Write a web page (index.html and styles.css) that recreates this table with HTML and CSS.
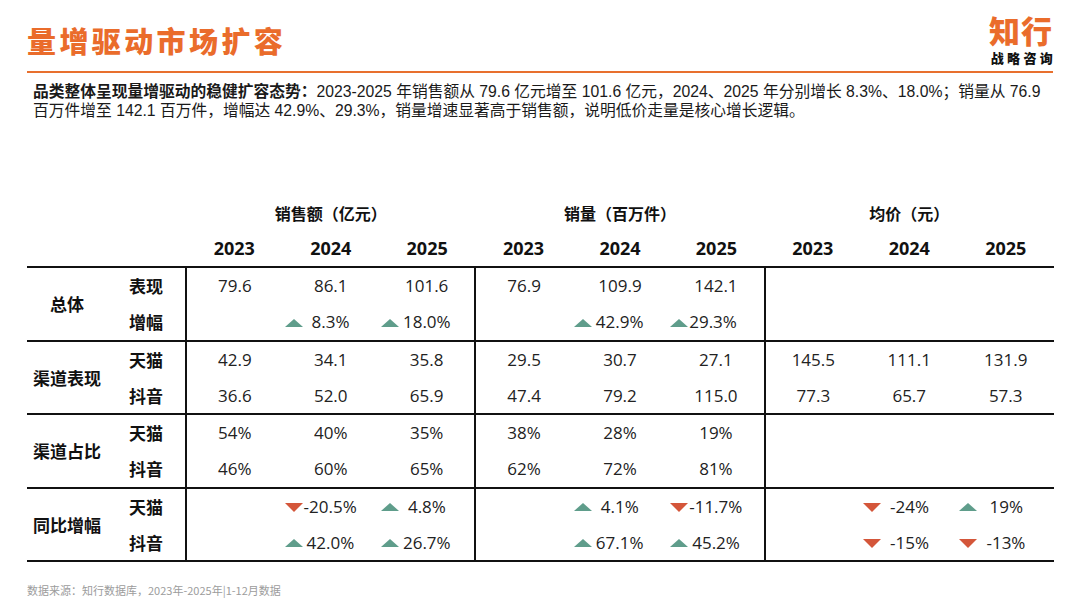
FILE: index.html
```html
<!DOCTYPE html>
<html lang="zh-CN">
<head>
<meta charset="utf-8">
<title>量增驱动市场扩容</title>
<link rel="stylesheet" href="styles.css">
</head>
<body>
<div class="page">
  <header class="top">
    <h1 class="title">量增驱动市场扩容</h1>
    <div class="logo">
      <div class="logo-main">知行</div>
      <div class="logo-sub">战略咨询</div>
    </div>
  </header>

  <p class="summary"><b>品类整体呈现量增驱动的稳健扩容态势：</b>2023-2025 年销售额从 79.6 亿元增至 101.6 亿元，2024、2025 年分别增长 8.3%、18.0%；销量从 76.9<br>百万件增至 142.1 百万件，增幅达 42.9%、29.3%，销量增速显著高于销售额，说明低价走量是核心增长逻辑。</p>

  <table class="data">
    <colgroup>
      <col class="c-group"><col class="c-sub">
      <col class="c-val"><col class="c-val"><col class="c-val">
      <col class="c-val"><col class="c-val"><col class="c-val">
      <col class="c-val"><col class="c-val"><col class="c-val">
    </colgroup>
    <thead>
      <tr class="h-group">
        <th colspan="2"></th>
        <th colspan="3">销售额（亿元）</th>
        <th colspan="3">销量（百万件）</th>
        <th colspan="3">均价（元）</th>
      </tr>
      <tr class="h-year">
        <th colspan="2"></th>
        <th>2023</th><th>2024</th><th>2025</th>
        <th>2023</th><th>2024</th><th>2025</th>
        <th>2023</th><th>2024</th><th>2025</th>
      </tr>
    </thead>
    <tbody>
      <tr class="first">
        <th rowspan="2" class="grp">总体</th>
        <th class="sub">表现</th>
        <td class="sep">79.6</td><td>86.1</td><td>101.6</td>
        <td class="sep">76.9</td><td>109.9</td><td>142.1</td>
        <td class="sep"></td><td></td><td></td>
      </tr>
      <tr>
        <th class="sub">增幅</th>
        <td class="sep"></td>
        <td class="chg"><span class="up"></span><span class="gap-l">8.3%</span></td>
        <td class="chg"><span class="up"></span><span class="gap-s">18.0%</span></td>
        <td class="sep"></td>
        <td class="chg"><span class="up"></span><span class="gap-s">42.9%</span></td>
        <td class="chg"><span class="up"></span><span class="gap-xs">29.3%</span></td>
        <td class="sep"></td><td></td><td></td>
      </tr>

      <tr class="first">
        <th rowspan="2" class="grp">渠道表现</th>
        <th class="sub">天猫</th>
        <td class="sep">42.9</td><td>34.1</td><td>35.8</td>
        <td class="sep">29.5</td><td>30.7</td><td>27.1</td>
        <td class="sep">145.5</td><td>111.1</td><td>131.9</td>
      </tr>
      <tr>
        <th class="sub">抖音</th>
        <td class="sep">36.6</td><td>52.0</td><td>65.9</td>
        <td class="sep">47.4</td><td>79.2</td><td>115.0</td>
        <td class="sep">77.3</td><td>65.7</td><td>57.3</td>
      </tr>

      <tr class="first">
        <th rowspan="2" class="grp">渠道占比</th>
        <th class="sub">天猫</th>
        <td class="sep">54%</td><td>40%</td><td>35%</td>
        <td class="sep">38%</td><td>28%</td><td>19%</td>
        <td class="sep"></td><td></td><td></td>
      </tr>
      <tr>
        <th class="sub">抖音</th>
        <td class="sep">46%</td><td>60%</td><td>65%</td>
        <td class="sep">62%</td><td>72%</td><td>81%</td>
        <td class="sep"></td><td></td><td></td>
      </tr>

      <tr class="first">
        <th rowspan="2" class="grp">同比增幅</th>
        <th class="sub">天猫</th>
        <td class="sep"></td>
        <td class="chg"><span class="down"></span><span class="gap-xs">-20.5%</span></td>
        <td class="chg"><span class="up"></span><span class="gap-l">4.8%</span></td>
        <td class="sep"></td>
        <td class="chg"><span class="up"></span><span class="gap-l">4.1%</span></td>
        <td class="chg"><span class="down"></span><span class="gap-xs">-11.7%</span></td>
        <td class="sep"></td>
        <td class="chg"><span class="down"></span><span class="gap-l">-24%</span></td>
        <td class="chg"><span class="up"></span><span class="gap-xl">19%</span></td>
      </tr>
      <tr class="last">
        <th class="sub">抖音</th>
        <td class="sep"></td>
        <td class="chg"><span class="up"></span><span class="gap-s">42.0%</span></td>
        <td class="chg"><span class="up"></span><span class="gap-s">26.7%</span></td>
        <td class="sep"></td>
        <td class="chg"><span class="up"></span><span class="gap-s">67.1%</span></td>
        <td class="chg"><span class="up"></span><span class="gap-s">45.2%</span></td>
        <td class="sep"></td>
        <td class="chg"><span class="down"></span><span class="gap-l">-15%</span></td>
        <td class="chg"><span class="down"></span><span class="gap-l">-13%</span></td>
      </tr>
    </tbody>
  </table>

  <p class="source">数据来源：知行数据库，2023年-2025年|1-12月数据</p>
</div>
</body>
</html>
```

FILE: styles.css
```css
* { box-sizing: border-box; }

html, body {
  margin: 0;
  padding: 0;
  background: #ffffff;
}

body {
  width: 1080px;
  height: 608px;
  overflow: hidden;
  font-family: "Open Sans", "Noto Sans CJK SC", sans-serif;
  color: #1c1c1c;
}

.page {
  padding: 0 27px;
}

/* ---------- header ---------- */
.top {
  display: flex;
  justify-content: space-between;
  align-items: flex-start;
  height: 73px;
  padding-top: 12px;
  border-bottom: 2px solid #e8702e;
}

.title {
  margin: 12px 0 0 0;
  font-family: "Noto Sans CJK SC", sans-serif;
  font-size: 29px;
  line-height: 32px;
  font-weight: 900;
  letter-spacing: 3.4px;
  color: #ea6c2b;
}

.logo {
  display: flex;
  flex-direction: column;
  align-items: flex-end;
  font-family: "Noto Sans CJK SC", sans-serif;
  font-weight: 900;
}

.logo-main {
  margin-top: 2px;
  font-size: 31px;
  line-height: 31px;
  letter-spacing: 1px;
  color: #ea6c2b;
}

.logo-sub {
  margin-top: 6px;
  font-size: 13px;
  line-height: 14px;
  letter-spacing: 3.3px;
  margin-right: -3px;
  color: #111;
}

/* ---------- summary ---------- */
.summary {
  margin: 8px 0 0 6px;
  font-family: "Liberation Sans", "Noto Sans CJK SC", sans-serif;
  font-size: 15.75px;
  line-height: 19px;
  color: #1a1a1a;
  white-space: nowrap;
}

.summary b {
  font-family: "Noto Sans CJK SC", sans-serif;
  font-weight: 700;
}

/* ---------- table ---------- */
.data {
  margin-top: 75px;
  width: 1027px;
  table-layout: fixed;
  border-collapse: collapse;
  font-family: "Open Sans", "Noto Sans CJK SC", sans-serif;
}

.c-group { width: 80px; }
.c-sub { width: 79px; }
.c-val { width: 96.33px; }

.data th,
.data td {
  padding: 0;
  text-align: center;
  vertical-align: middle;
  white-space: nowrap;
}

.h-group th {
  height: 35px;
  font-family: "Noto Sans CJK SC", sans-serif;
  font-size: 16px;
  font-weight: 700;
  color: #111;
}

.h-year th {
  height: 37px;
  font-size: 18px;
  font-weight: 700;
  color: #111;
  border-bottom: 2px solid #111;
}

.data tbody tr {
  height: 36.75px;
}

.data tbody tr.first th,
.data tbody tr.first td {
  border-top: 2px solid #111;
}

.data tbody tr.last th,
.data tbody tr.last td {
  border-bottom: 2px solid #111;
}

.data tbody th.grp {
  border-bottom: 2px solid #111;
}

.grp,
.sub {
  font-family: "Noto Sans CJK SC", sans-serif;
  font-size: 17px;
  font-weight: 700;
  color: #111;
}

.sub {
  padding-right: 2px;
}

.data td {
  font-size: 17px;
  color: #222;
}

.data td.sep {
  border-left: 2px solid #111;
}

.data td.chg {
  text-align: left;
  padding-left: 2px;
}

.up,
.down {
  display: inline-block;
  width: 0;
  height: 0;
  border-left: 9px solid transparent;
  border-right: 9px solid transparent;
  vertical-align: middle;
  position: relative;
  top: -1px;
}

.up {
  border-bottom: 8px solid #5f9d8b;
}

.down {
  border-top: 9px solid #d4563a;
}

.gap-xs { margin-left: 1px; }
.gap-s  { margin-left: 4px; }
.gap-l  { margin-left: 9px; }
.gap-xl { margin-left: 12px; }

/* ---------- footer ---------- */
.source {
  margin: 21px 0 0 0;
  font-family: "Noto Sans CJK SC", sans-serif;
  font-size: 11px;
  line-height: 14px;
  color: #9c9c9c;
}
```
